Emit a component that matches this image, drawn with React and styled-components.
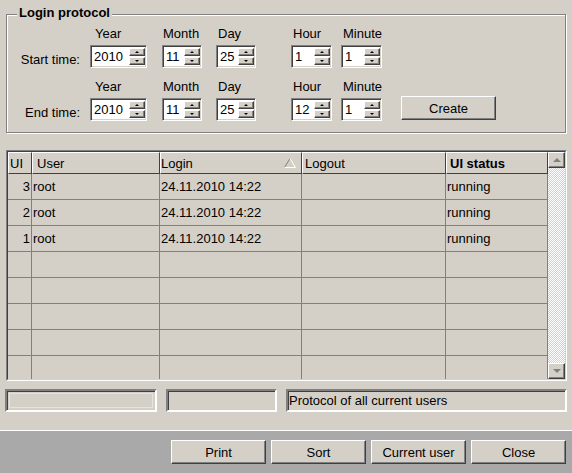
import React from 'react';
import styled, { createGlobalStyle } from 'styled-components';

const GlobalStyle = createGlobalStyle`
  html, body {
    margin: 0;
    padding: 0;
    background: #d4d0c8;
  }
  body {
    font-family: "Liberation Sans", Arial, sans-serif;
    font-size: 13px;
    color: #000;
  }
  * { box-sizing: border-box; }
`;

const Window = styled.div`
  width: 572px;
  height: 473px;
  display: flex;
  flex-direction: column;
  background: #d4d0c8;
  overflow: hidden;
`;

const Main = styled.div`
  height: 430px;
  padding: 0 5px 0 6px;
  display: flex;
  flex-direction: column;
`;

const Group = styled.div`
  position: relative;
  width: 560px;
  margin-top: 14px;
  padding: 11px 0 11px 0;
  border: 1px solid #808080;
  box-shadow: inset 1px 1px 0 #fff, 1px 1px 0 #fff;
  display: flex;
  flex-direction: column;
  gap: 11px;
`;

const Legend = styled.span`
  position: absolute;
  top: -10px;
  left: 10px;
  padding: 0 2px;
  background: #d4d0c8;
  font-weight: bold;
  line-height: 16px;
`;

const TimeRow = styled.div`
  display: flex;
  align-items: flex-end;
`;

const RowLabel = styled.div`
  width: 73px;
  height: 23px;
  line-height: 29px;
  text-align: right;
  white-space: nowrap;
`;

const Field = styled.div`
  display: flex;
  flex-direction: column;
  gap: 3px;
  margin-left: ${p => p.$ml}px;
`;

const FieldLabel = styled.div`
  line-height: 16px;
  padding-left: ${p => p.$indent}px;
  white-space: nowrap;
`;

const SpinBox = styled.div`
  width: ${p => p.$w}px;
  height: 23px;
  display: flex;
  padding: 1px;
  background: #fff;
  border: 1px solid;
  border-color: #808080 #fff #fff #808080;
  box-shadow: inset 1px 1px 0 #404040, inset -1px -1px 0 #d4d0c8;
`;

const SpinText = styled.div`
  flex: 1;
  line-height: 19px;
  padding-left: 2px;
  font-size: 13px;
`;

const SpinButtons = styled.div`
  width: 16px;
  display: flex;
  flex-direction: column;
  gap: 1px;
  padding: 1px 0;
`;

const raised = `
  background: #d4d0c8;
  border: 1px solid;
  border-color: #fff #404040 #404040 #fff;
  box-shadow: inset -1px -1px 0 #808080;
`;

const SpinButton = styled.div`
  flex: 1;
  ${raised}
  display: flex;
  align-items: center;
  justify-content: center;
`;

const Arrow = styled.span`
  width: 0;
  height: 0;
  border-left: ${p => p.$size}px solid transparent;
  border-right: ${p => p.$size}px solid transparent;
  ${p => (p.$dir === 'up' ? 'border-bottom' : 'border-top')}: ${p => p.$size}px solid ${p => p.$color};
`;

const Button = styled.button`
  width: 95px;
  height: 24px;
  padding: 0;
  font-family: inherit;
  font-size: 13px;
  color: #000;
  ${raised}
  margin-left: ${p => p.$ml || 0}px;
  margin-bottom: ${p => p.$mb || 0}px;
`;

const TableFrame = styled.div`
  margin-top: 17px;
  height: 231px;
  border: 1px solid;
  border-color: #808080 #fff #fff #808080;
`;

const TableInner = styled.div`
  height: 100%;
  display: flex;
  border: 1px solid;
  border-color: #404040 #d4d0c8 #d4d0c8 #404040;
  overflow: hidden;
`;

const Grid = styled.div`
  width: 540px;
  display: grid;
  grid-template-columns: 24px 128px 142px 144px 102px;
  grid-auto-rows: 26px;
  grid-template-rows: 22px;
  align-content: start;
`;

const HeadCell = styled.div`
  display: flex;
  align-items: center;
  justify-content: space-between;
  padding: 0 5px 0 ${p => p.$pl}px;
  border: 1px solid;
  border-color: #fff #404040 #404040 #fff;
  font-weight: ${p => (p.$bold ? 'bold' : 'normal')};
  white-space: nowrap;
`;

const Cell = styled.div`
  display: flex;
  align-items: center;
  justify-content: ${p => (p.$right ? 'flex-end' : 'flex-start')};
  padding: 0 1px;
  border-right: 1px solid #808080;
  border-bottom: 1px solid #808080;
  white-space: nowrap;
`;

const Scrollbar = styled.div`
  width: 17px;
  display: flex;
  flex-direction: column;
  justify-content: space-between;
  background-color: #fff;
  background-image: repeating-conic-gradient(#d4d0c8 0 25%, #fff 0 50%);
  background-size: 2px 2px;
`;

const ScrollButton = styled.div`
  height: 16px;
  ${raised}
  display: flex;
  align-items: center;
  justify-content: center;
`;

const StatusRow = styled.div`
  margin-top: 8px;
  margin-left: -1px;
  height: 23px;
  display: flex;
  gap: 9px;
`;

const StatusField = styled.div`
  width: ${p => (p.$w ? `${p.$w}px` : 'auto')};
  flex: ${p => (p.$w ? 'none' : 1)};
  padding-left: 1px;
  line-height: 19px;
  border: 2px solid;
  border-color: #808080 #fff #fff #808080;
  box-shadow: inset 1px 1px 0 #404040
    ${p => (p.$disabled ? ', inset 0 0 0 2px #d4d0c8, inset 0 0 0 3px #e6e3dd' : '')};
`;

const BottomBar = styled.div`
  flex: 1;
  display: flex;
  justify-content: flex-end;
  gap: 5px;
  padding: 9px 6px 0 0;
  border-top: 1px solid #fff;
  background: #a9a9a9;
`;

const Spinner = ({ value, width }) => (
  <SpinBox $w={width}>
    <SpinText>{value}</SpinText>
    <SpinButtons>
      <SpinButton><Arrow $dir="up" $size={2} $color="#000" /></SpinButton>
      <SpinButton><Arrow $dir="down" $size={2} $color="#000" /></SpinButton>
    </SpinButtons>
  </SpinBox>
);

const SortIcon = () => (
  <svg width="12" height="10" viewBox="0 0 12 10">
    <path d="M0.5 9.5 L6 0.5" stroke="#808080" fill="none" />
    <path d="M6 0.5 L11.5 9.5 L0.5 9.5" stroke="#fff" fill="none" />
  </svg>
);

const fields = [
  { label: 'Year', indent: 5, ml: 10, w: 57 },
  { label: 'Month', indent: 1, ml: 15, w: 40 },
  { label: 'Day', indent: 2, ml: 14, w: 40 },
  { label: 'Hour', indent: 2, ml: 35, w: 41 },
  { label: 'Minute', indent: 2, ml: 9, w: 41 },
];

const startValues = ['2010', '11', '25', '1', '1'];
const endValues = ['2010', '11', '25', '12', '1'];

const rows = [
  { ui: '3', user: 'root', login: '24.11.2010 14:22', logout: '', status: 'running' },
  { ui: '2', user: 'root', login: '24.11.2010 14:22', logout: '', status: 'running' },
  { ui: '1', user: 'root', login: '24.11.2010 14:22', logout: '', status: 'running' },
  {}, {}, {}, {}, {},
];

export default function App() {
  return (
    <Window>
      <GlobalStyle />
      <Main>
        <Group>
          <Legend>Login protocol</Legend>
          <TimeRow>
            <RowLabel>Start time:</RowLabel>
            {fields.map((f, i) => (
              <Field key={f.label} $ml={f.ml}>
                <FieldLabel $indent={f.indent}>{f.label}</FieldLabel>
                <Spinner value={startValues[i]} width={f.w} />
              </Field>
            ))}
          </TimeRow>
          <TimeRow>
            <RowLabel>End time:</RowLabel>
            {fields.map((f, i) => (
              <Field key={f.label} $ml={f.ml}>
                <FieldLabel $indent={f.indent}>{f.label}</FieldLabel>
                <Spinner value={endValues[i]} width={f.w} />
              </Field>
            ))}
            <Button $ml={19} $mb={1}>Create</Button>
          </TimeRow>
        </Group>

        <TableFrame>
          <TableInner>
            <Grid>
              <HeadCell $pl={1}>UI</HeadCell>
              <HeadCell $pl={4}>User</HeadCell>
              <HeadCell $pl={0}>Login<SortIcon /></HeadCell>
              <HeadCell $pl={2}>Logout</HeadCell>
              <HeadCell $pl={3} $bold>UI status</HeadCell>
              {rows.map((r, i) => (
                <React.Fragment key={i}>
                  <Cell $right>{r.ui}</Cell>
                  <Cell>{r.user}</Cell>
                  <Cell>{r.login}</Cell>
                  <Cell>{r.logout}</Cell>
                  <Cell>{r.status}</Cell>
                </React.Fragment>
              ))}
            </Grid>
            <Scrollbar>
              <ScrollButton><Arrow $dir="up" $size={4} $color="#808080" /></ScrollButton>
              <ScrollButton><Arrow $dir="down" $size={4} $color="#808080" /></ScrollButton>
            </Scrollbar>
          </TableInner>
        </TableFrame>

        <StatusRow>
          <StatusField $w={152} $disabled />
          <StatusField $w={111} />
          <StatusField>Protocol of all current users</StatusField>
        </StatusRow>
      </Main>
      <BottomBar>
        <Button>Print</Button>
        <Button>Sort</Button>
        <Button>Current user</Button>
        <Button>Close</Button>
      </BottomBar>
    </Window>
  );
}
